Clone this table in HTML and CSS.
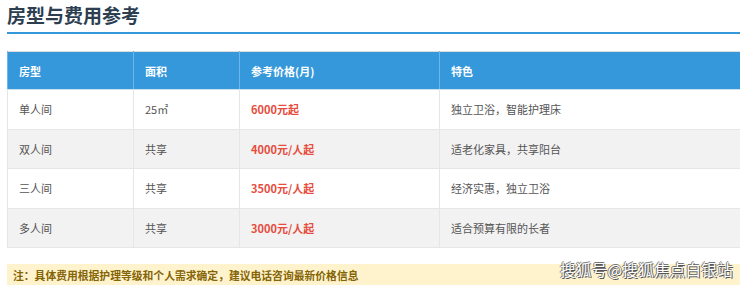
FILE: index.html
```html
<!DOCTYPE html>
<html lang="zh">
<head>
<meta charset="utf-8">
<title>房型与费用参考</title>
<link rel="stylesheet" href="styles.css">
</head>
<body>
<div class="page">
  <h2 class="title">房型与费用参考</h2>
  <table class="fees">
    <colgroup>
      <col class="c1"><col class="c2"><col class="c3"><col class="c4">
    </colgroup>
    <thead>
      <tr><th>房型</th><th>面积</th><th>参考价格(月)</th><th>特色</th></tr>
    </thead>
    <tbody>
      <tr><td>单人间</td><td>25㎡</td><td class="price">6000元起</td><td>独立卫浴，智能护理床</td></tr>
      <tr><td>双人间</td><td>共享</td><td class="price">4000元/人起</td><td>适老化家具，共享阳台</td></tr>
      <tr><td>三人间</td><td>共享</td><td class="price">3500元/人起</td><td>经济实惠，独立卫浴</td></tr>
      <tr><td>多人间</td><td>共享</td><td class="price">3000元/人起</td><td>适合预算有限的长者</td></tr>
    </tbody>
  </table>
  <div class="note">注：具体费用根据护理等级和个人需求确定，建议电话咨询最新价格信息</div>
</div>
<div class="watermark">搜狐号@搜狐焦点白银站</div>
</body>
</html>
```
FILE: styles.css
```css
html, body {
  margin: 0;
  padding: 0;
  background: #fff;
  overflow: hidden;
}
body {
  font-family: "Noto Sans CJK SC", "Noto Sans", sans-serif;
  width: 740px;
  height: 285px;
  position: relative;
}
.page {
  padding-left: 7px;
  width: 733px;
}
.title {
  margin: 0;
  padding: 3px 0 5px;
  font-size: 19px;
  line-height: 24px;
  font-weight: 700;
  color: #2c3e50;
  border-bottom: 2px solid #3498db;
}
.fees {
  margin-top: 17px;
  width: 100%;
  border-collapse: collapse;
  font-size: 11px;
  color: #555;
  border: 1px solid #ddd;
  border-right: 0;
}
.c1 { width: 126px; }
.c2 { width: 106px; }
.c3 { width: 200px; }
.fees th {
  background: #3498db;
  color: #fff;
  font-weight: 700;
  text-align: left;
  height: 37px;
  padding: 0 0 0 11px;
  border-left: 1px solid #6fb6e8;
  border-bottom: 1px solid #cfe0ee;
}
.fees td {
  height: 38.5px;
  padding: 0 0 0 11px;
  border: 1px solid #e6e6e6;
  border-top: 0;
}
.fees td:last-child {
  border-right: 0;
}
.fees tbody tr:nth-child(even) td {
  background: #f2f2f2;
}
.fees td.price {
  color: #e74c3c;
  font-weight: 700;
}
.note {
  margin-top: 16px;
  background: #fff3cd;
  color: #856404;
  font-size: 10.8px;
  font-weight: 700;
  line-height: 22px;
  padding: 0 6px;
}
.watermark {
  position: absolute;
  left: 560px;
  top: 258px;
  font-size: 15.5px;
  line-height: 22px;
  color: #fff;
  letter-spacing: 0.3px;
  text-shadow: 1px 1px 0 #555, -1px 0 0 #777, 0 -1px 0 #777;
}
```
